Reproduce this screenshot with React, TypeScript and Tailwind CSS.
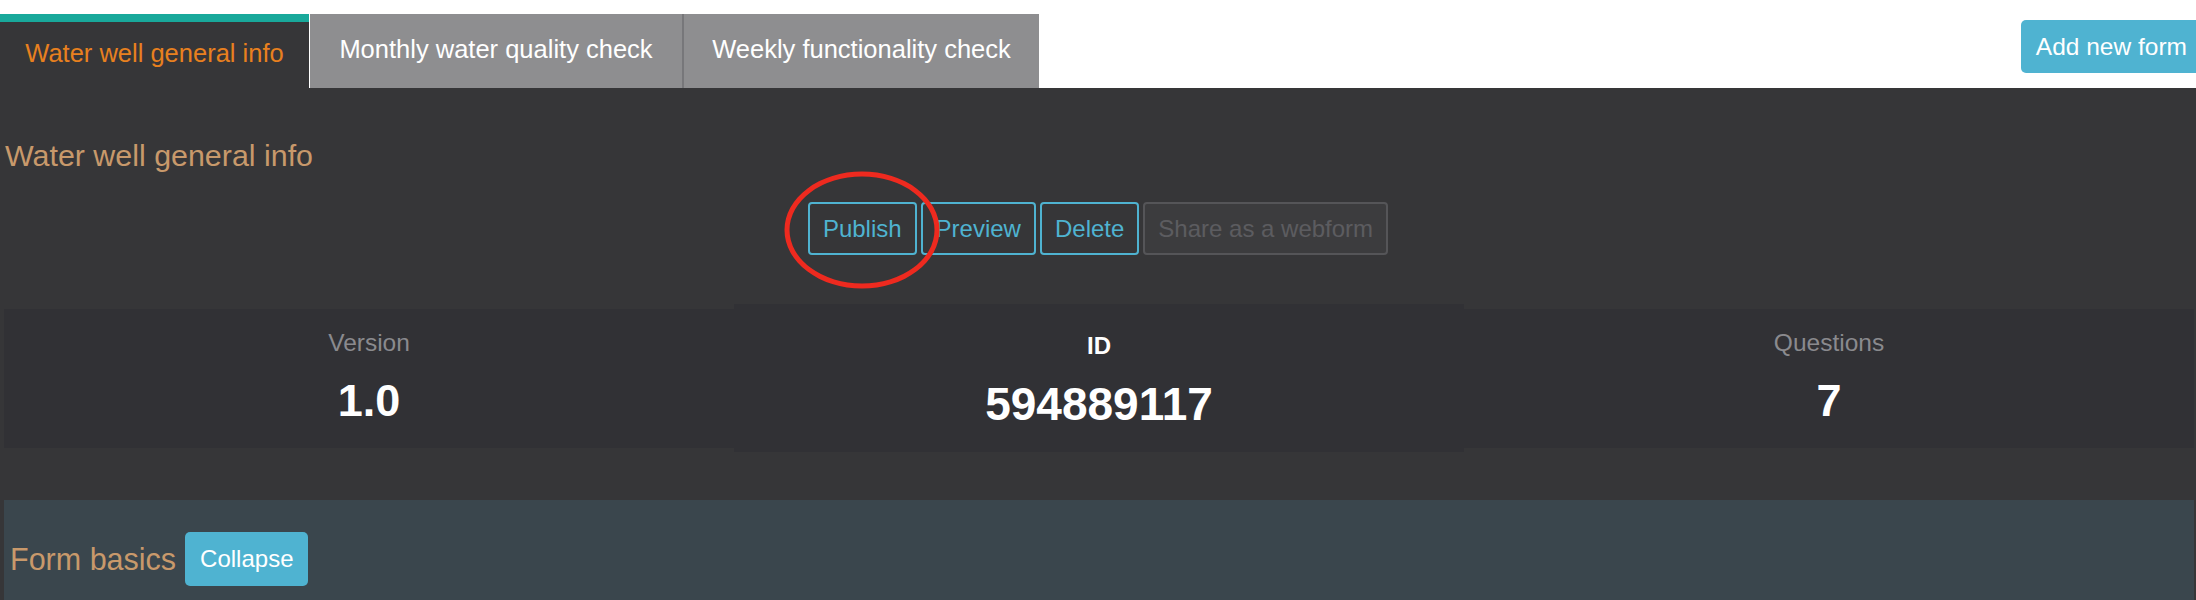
import React from "react";

const font = { fontFamily: '"Liberation Sans", Arial, Helvetica, sans-serif' };

function Stat({ label, value, middle }: { label: string; value: string; middle?: boolean }) {
  if (middle) {
    return (
      <div className="h-[148px] bg-[#313135] flex flex-col items-center pt-[25px]">
        <div className="text-[24px] leading-[34px] font-bold text-white">{label}</div>
        <div className="mt-[16px] text-[46px] leading-[50px] font-bold text-white">{value}</div>
      </div>
    );
  }
  return (
    <div className="h-[139px] bg-[#313135] flex flex-col items-center pt-[17px]">
      <div className="text-[24.5px] leading-[34px] text-[#8a8a8e]">{label}</div>
      <div className="mt-[16px] text-[45px] leading-[50px] font-bold text-white">{value}</div>
    </div>
  );
}

export default function App() {
  return (
    <div className="w-[2196px] h-[600px] overflow-hidden bg-white flex flex-col" style={font}>
      {/* top bar */}
      <div className="h-[88px] shrink-0 flex items-start justify-between bg-white">
        <div className="flex items-stretch mt-[14px] h-[74px]">
          <div className="w-[309px] border-t-[8px] border-[#19a99b] bg-[#363638] flex items-center justify-center pb-[3px] text-[25.5px] text-[#e8801f]">
            Water well general info
          </div>
          <div className="ml-[1px] w-[374px] bg-[#8e8e90] border-r-[2px] border-[#77777a] flex items-center justify-center pb-[4px] text-[25.5px] text-white">
            Monthly water quality check
          </div>
          <div className="w-[355px] bg-[#8e8e90] flex items-center justify-center pb-[4px] text-[25.5px] text-white">
            Weekly functionality check
          </div>
        </div>
        <button className="mt-[20px] h-[53px] mr-[-6px] px-[15px] rounded-[5px] bg-[#4fb3d1] text-white text-[24.5px] leading-[34px] whitespace-nowrap">
          Add new form
        </button>
      </div>

      {/* dark area */}
      <div className="flex-1 bg-[#363638] flex flex-col">
        <div className="mt-[51px] pl-[5px] text-[30.4px] leading-[33px] text-[#c8996b]">Water well general info</div>

        <div className="mt-[30px] flex justify-center gap-[4px]">
          <div className="relative">
            <button className="h-[53px] px-[13px] border-2 border-[#4fb3d1] rounded-[4px] text-[#4fb3d1] text-[24px] leading-[33px]">
              Publish
            </button>
            <div className="absolute left-1/2 top-1/2 -translate-x-1/2 -translate-y-1/2 mt-[1px] w-[155px] h-[117px] rounded-[50%] border-[5px] border-[#ee2a1f] pointer-events-none" />
          </div>
          <button className="h-[53px] px-[13px] border-2 border-[#4fb3d1] rounded-[4px] text-[#4fb3d1] text-[24px] leading-[33px]">
            Preview
          </button>
          <button className="h-[53px] px-[13px] border-2 border-[#4fb3d1] rounded-[4px] text-[#4fb3d1] text-[24px] leading-[33px]">
            Delete
          </button>
          <button className="h-[53px] px-[13px] border-2 border-[#555558] rounded-[4px] bg-[#3c3c3e] text-[#5c5c60] text-[24px] leading-[33px]">
            Share as a webform
          </button>
        </div>

        <div className="mt-[49px] ml-[4px] mr-[2px] grid grid-cols-3 items-center h-[148px]">
          <Stat label="Version" value="1.0" />
          <Stat label="ID" value="594889117" middle />
          <Stat label="Questions" value="7" />
        </div>

        <div className="mt-[48px] ml-[4px] mr-[2px] flex-1 bg-[#3a464d] pt-[32px] pl-[6px]">
          <div className="flex items-center gap-[9px]">
            <span className="text-[30.5px] leading-[34px] text-[#c8996b]">Form basics</span>
            <button className="h-[54px] px-[15px] rounded-[5px] bg-[#4fb3d1] text-white text-[24px] leading-[34px]">
              Collapse
            </button>
          </div>
        </div>
      </div>
    </div>
  );
}
